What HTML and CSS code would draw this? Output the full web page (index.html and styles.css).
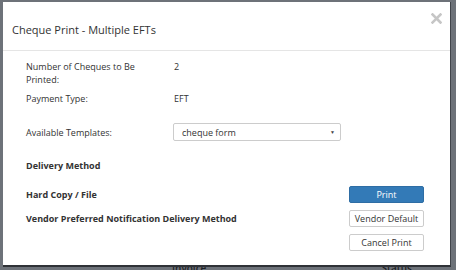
FILE: index.html
```html
<!DOCTYPE html>
<html>
<head>
    <meta name="viewport" content="width=device-width, initial-scale=1.0">
    <link rel="stylesheet" href="styles.css">
</head>
<body>
    <div class="backdrop-row">
        <span>Invoice</span>
        <span>Status</span>
    </div>
    <div class="modal">
        <div class="modal-header">
            <div class="modal-title">Cheque Print - Multiple EFTs</div>
            <svg class="close" width="11" height="11" viewBox="0 0 11 11">
                <path d="M1.5 1.5 L9.5 9.5 M9.5 1.5 L1.5 9.5" stroke="#c6c6c6" stroke-width="2.6" stroke-linecap="square"/>
            </svg>
        </div>
        <div class="modal-body">
            <div class="field-row">
                <div class="field-label">Number of Cheques to Be Printed:</div>
                <div class="field-value">2</div>
            </div>
            <div class="field-row">
                <div class="field-label">Payment Type:</div>
                <div class="field-value">EFT</div>
            </div>
            <div class="field-row templates">
                <div class="field-label">Available Templates:</div>
                <div class="select-box">
                    <span>cheque form</span>
                    <span class="caret">&#9660;</span>
                </div>
            </div>
            <div class="section-title">Delivery Method</div>
            <div class="action-row">
                <div class="action-label">Hard Copy / File</div>
                <button class="btn btn-primary">Print</button>
            </div>
            <div class="action-row">
                <div class="action-label">Vendor Preferred Notification Delivery Method</div>
                <button class="btn">Vendor Default</button>
            </div>
            <div class="action-row">
                <div class="action-label"></div>
                <button class="btn">Cancel Print</button>
            </div>
        </div>
    </div>
</body>
</html>
```

FILE: styles.css
```css
body {
    margin: 0;
    background: #6d7279;
    font-family: "Open Sans", Arial, sans-serif;
    color: #333;
    height: 270px;
    overflow: hidden;
    position: relative;
}
.backdrop-row {
    position: absolute;
    left: 172px;
    top: 261px;
    width: 240px;
    display: flex;
    justify-content: space-between;
    font-size: 10px;
    font-weight: 600;
    color: #1e2226;
}
.modal {
    position: relative;
    z-index: 1;
    margin: 2px 5px 0 3px;
    height: 265px;
    background: #fff;
    border-right: 1px solid #40444a;
    border-bottom: 2px solid #2f3237;
    box-sizing: border-box;
}
.modal-header {
    display: flex;
    justify-content: space-between;
    align-items: flex-start;
    height: 48px;
    border-bottom: 1px solid #e5e5e5;
    padding: 0 8px 0 9px;
}
.modal-title {
    font-size: 11px;
    line-height: 16px;
    margin-top: 20px;
}
.close {
    margin-top: 11px;
}
.modal-body {
    padding: 9px 26px 0 23px;
    font-size: 9px;
}
.field-row {
    display: flex;
    line-height: 13px;
    margin-bottom: 6px;
}
.field-label {
    width: 148px;
    padding-right: 28px;
    box-sizing: border-box;
}
.templates {
    align-items: center;
    margin: 18px 0 18px;
}
.templates .field-label {
    width: 147px;
}
.select-box {
    width: 168px;
    height: 18px;
    border: 1px solid #ccc;
    border-radius: 2px;
    box-sizing: border-box;
    display: flex;
    justify-content: space-between;
    align-items: center;
    padding: 0 5px 0 8px;
}
.caret {
    font-size: 5px;
    color: #444;
}
.section-title {
    font-weight: bold;
    line-height: 13px;
    margin-bottom: 14px;
}
.action-row {
    display: flex;
    justify-content: space-between;
    align-items: center;
    font-weight: bold;
    margin-bottom: 7px;
}
.btn {
    width: 75px;
    height: 17px;
    border: 1px solid #ccc;
    border-radius: 2px;
    background: #fff;
    color: #333;
    font-family: "Open Sans", Arial, sans-serif;
    font-size: 9px;
    padding: 0;
}
.btn-primary {
    background: #337ab7;
    border-color: #2e6da4;
    color: #fff;
}
```
